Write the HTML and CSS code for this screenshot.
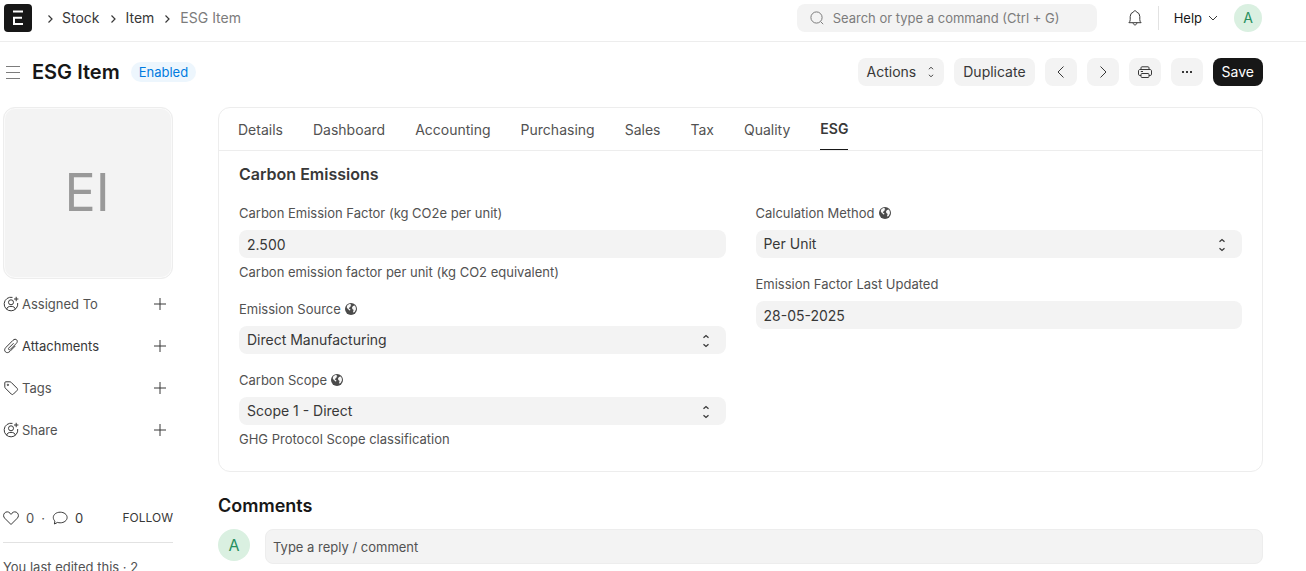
FILE: index.html
```html
<!DOCTYPE html>
<html lang="en">
<head>
<meta charset="utf-8">
<title>ESG Item</title>
<link rel="stylesheet" href="styles.css">
</head>
<body>
<svg class="sprite" aria-hidden="true">
  <symbol id="chevron-right" viewBox="0 0 16 16"><path d="M6.500 4.500 10 8l-3.500 3.500"/></symbol>
  <symbol id="plus" viewBox="0 0 16 16"><path d="M8 2v12M2 8h12"/></symbol>
  <symbol id="updown" viewBox="0 0 16 16"><path d="M5.500 4.800 8 2.600l2.500 2.200M5.500 11.200 8 13.400l2.500-2.200"/></symbol>
  <symbol id="user-plus" viewBox="0 0 16 16"><path d="M9.500 1.400A6.800 6.800 0 1 0 14.700 7M3.600 13.200c.4-1.900 1.900-2.800 4.400-2.800s4 .9 4.400 2.800M13.200.8v4.400M11 3h4.400"/><circle cx="8" cy="6.300" r="2.500"/></symbol>
  <symbol id="globe" viewBox="0 0 12 12"><circle cx="6" cy="6" r="6" fill="#4a4a4a" stroke="none"/><path d="M2.200 2.500 4.200 1.100l1.500.2.600 1-1 .6.300.9-1.200.7-.7 1.100 1.200.3.600.9-.8 1-.5-.9-1.400-1-1.100-1.600zM8 3.100l1.700-.6 1 1.500.3 2.200-1.200 2.500-1.400 1.100-.3-1.600.6-1.300-1.400-.8-.3-1.500z" fill="#f7f7f7" stroke="none"/></symbol>
</svg>

<header class="navbar">
  <nav class="breadcrumbs" aria-label="Breadcrumb">
    <a class="logo" href="#" aria-label="Home">
      <svg viewBox="0 0 28 28"><rect width="28" height="28" rx="4" fill="#171717" stroke="none"/><path d="M9 7.500h10M10 13v7M9 13.800h9M9 20h10" stroke="#fff" stroke-width="2"/></svg>
    </a>
    <svg class="sep"><use href="#chevron-right"/></svg>
    <a href="#">Stock</a>
    <svg class="sep"><use href="#chevron-right"/></svg>
    <a href="#">Item</a>
    <svg class="sep"><use href="#chevron-right"/></svg>
    <span class="current">ESG Item</span>
  </nav>
  <div class="nav-tools">
    <label class="search">
      <svg viewBox="0 0 16 16"><circle cx="7.500" cy="7.500" r="5.600"/><path d="m11.700 11.700 2.500 2.500"/></svg>
      <input type="text" aria-label="Search" placeholder="Search or type a command (Ctrl + G)">
    </label>
    <button class="bell" aria-label="Notifications"><svg viewBox="0 0 16 16"><path d="M6.200 12.700H1.900c.9-1 1.300-1.600 1.300-3V6.500a4.800 4.800 0 0 1 3.400-4.600C6.900 1 7.300.7 8 .7s1.100.3 1.400 1.200a4.800 4.800 0 0 1 3.400 4.600v3.200c0 1.400.4 2 1.300 3H6.200c0 1.400.7 2.200 1.800 2.200s1.800-.8 1.800-2.200"/></svg></button>
    <button class="help">Help <svg viewBox="0 0 12 12"><path d="m2 4 4 4 4-4"/></svg></button>
    <button class="avatar small" aria-label="Account">A</button>
  </div>
</header>

<div class="page">
  <div class="page-head">
    <button class="menu" aria-label="Toggle sidebar"><svg viewBox="0 0 16 16"><path d="M1 2.500h14M1 8.500h14M1 14.500h14"/></svg></button>
    <h1>ESG Item</h1>
    <span class="status">Enabled</span>
    <div class="actions">
      <button class="btn">Actions <svg class="caret"><use href="#updown"/></svg></button>
      <button class="btn">Duplicate</button>
      <button class="btn icon" aria-label="Previous"><svg viewBox="0 0 16 16"><path d="M10.500 2.500 5 8l5.500 5.500"/></svg></button>
      <button class="btn icon" aria-label="Next"><svg viewBox="0 0 16 16"><path d="M5.500 2.500 11 8l-5.500 5.500"/></svg></button>
      <button class="btn icon" aria-label="Print"><svg viewBox="0 0 16 16"><path d="M4 5.500V3.800c0-.6.400-1 1-1h6c.6 0 1 .4 1 1v1.700M4 11.500H2.800c-.8 0-1.300-.5-1.300-1.300V7c0-.9.600-1.500 1.500-1.500h10c.9 0 1.500.6 1.500 1.500v3.200c0 .8-.5 1.300-1.300 1.300H12M3.800 7.500H6"/><rect x="4" y="9.500" width="8" height="4" rx="1"/></svg></button>
      <button class="btn icon" aria-label="More"><svg viewBox="0 0 16 16"><path d="M3 7h2v2H3zM7 7h2v2H7zM11 7h2v2h-2z" fill="#383838" stroke="none"/></svg></button>
      <button class="btn primary">Save</button>
    </div>
  </div>

  <div class="layout">
    <aside class="sidebar">
      <div class="item-image">EI</div>
      <ul class="side-list">
        <li><svg><use href="#user-plus"/></svg><span>Assigned To</span><button aria-label="Add assignee"><svg><use href="#plus"/></svg></button></li>
        <li class="dark"><svg viewBox="0 0 16 16"><path d="m10.600 5.200-4.700 4.700c-.6.6-.6 1.200-.2 1.600s1.100.4 1.700-.2l5.800-5.800c1.300-1.300 1.400-2.700.5-3.600s-2.400-.9-3.700.4L3 9.300c-1.700 1.700-1.700 3.400-.6 4.500s2.900 1.200 4.600-.5l5.400-5.400"/></svg><span>Attachments</span><button aria-label="Add attachment"><svg><use href="#plus"/></svg></button></li>
        <li><svg viewBox="0 0 16 16"><path d="M1.800 2.800v4.100c0 .5.200.9.500 1.200l6 6c.6.600 1.500.6 2.100 0l3.700-3.700c.6-.6.600-1.500 0-2.100l-6-6c-.3-.3-.7-.5-1.200-.5H2.800c-.6 0-1 .4-1 1z"/><circle cx="4.900" cy="4.900" r=".7"/></svg><span>Tags</span><button aria-label="Add tag"><svg><use href="#plus"/></svg></button></li>
        <li><svg><use href="#user-plus"/></svg><span>Share</span><button aria-label="Add share"><svg><use href="#plus"/></svg></button></li>
      </ul>
      <div class="stats">
        <button aria-label="Like"><svg viewBox="0 0 16 16"><path d="M8 14.500 1.700 8.200C.3 6.800.2 4.600 1.500 3.100c1.500-1.700 4.100-1.700 5.500.1l1 1.200 1-1.200c1.400-1.800 4-1.800 5.500-.1 1.300 1.500 1.200 3.700-.2 5.100z"/></svg></button>
        <span>0</span><span>·</span>
        <svg viewBox="0 0 16 16"><path d="M8.200 2.200c3.900 0 6.900 2.300 6.900 5.300s-3 5.300-6.900 5.300c-.9 0-1.800-.1-2.600-.4L2.400 14l.5-3C1.900 10.100 1.300 8.900 1.300 7.500c0-3 3-5.300 6.900-5.300z"/></svg>
        <span class="count">0</span>
        <button class="follow">FOLLOW</button>
      </div>
      <p class="edited">You last edited this · 2</p>
    </aside>

    <main class="main">
      <section class="card">
        <nav class="tabs">
          <a href="#">Details</a><a href="#">Dashboard</a><a href="#">Accounting</a><a href="#">Purchasing</a><a href="#">Sales</a><a href="#">Tax</a><a href="#">Quality</a><a href="#" class="active" aria-current="page">ESG</a>
        </nav>
        <form class="form">
          <h2>Carbon Emissions</h2>
          <div class="columns">
            <div class="column">
              <div class="field">
                <label for="factor">Carbon Emission Factor (kg CO2e per unit)</label>
                <input id="factor" type="text" value="2.500">
                <p>Carbon emission factor per unit (kg CO2 equivalent)</p>
              </div>
              <div class="field">
                <label for="source">Emission Source <svg><use href="#globe"/></svg></label>
                <div class="select"><select id="source"><option>Direct Manufacturing</option></select><svg><use href="#updown"/></svg></div>
              </div>
              <div class="field">
                <label for="scope">Carbon Scope <svg><use href="#globe"/></svg></label>
                <div class="select"><select id="scope"><option>Scope 1 - Direct</option></select><svg><use href="#updown"/></svg></div>
                <p>GHG Protocol Scope classification</p>
              </div>
            </div>
            <div class="column">
              <div class="field">
                <label for="method">Calculation Method <svg><use href="#globe"/></svg></label>
                <div class="select"><select id="method"><option>Per Unit</option></select><svg><use href="#updown"/></svg></div>
              </div>
              <div class="field">
                <label for="updated">Emission Factor Last Updated</label>
                <input id="updated" type="text" value="28-05-2025">
              </div>
            </div>
          </div>
        </form>
      </section>
      <section class="comments">
        <h2>Comments</h2>
        <div class="comment-row">
          <span class="avatar">A</span>
          <input type="text" aria-label="Comment" placeholder="Type a reply / comment">
        </div>
      </section>
    </main>
  </div>
</div>
</body>
</html>
```
FILE: styles.css
```css
* { box-sizing: border-box; }
body {
  margin: 0;
  background: #fff;
  color: #383838;
  font: 14px/20px Inter, "Liberation Sans", sans-serif;
}
h1, h2, p, ul { margin: 0; padding: 0; }
a { color: inherit; text-decoration: none; }
button, input, select { font: inherit; color: inherit; border: 0; background: none; padding: 0; margin: 0; }
svg { width: 16px; height: 16px; flex: none; fill: none; stroke: #383838; stroke-width: 1; }
button svg { display: block; }
.sprite { position: absolute; width: 0; height: 0; }

.navbar {
  display: flex;
  align-items: center;
  justify-content: space-between;
  height: 42px;
  padding: 0 44px 6px 4px;
  border-bottom: 1px solid #ededed;
}
.breadcrumbs { display: flex; align-items: center; }
.logo { margin-right: 6px; }
.logo svg { display: block; width: 28px; height: 28px; }
.sep { margin: 2px 4px 0; stroke-width: 1.2; }
.current { color: #7c7c7c; }
.breadcrumbs .sep:not(:first-of-type) { margin: 2px 5px 0; }
.nav-tools { display: flex; align-items: center; font-size: 13px; }
.search {
  display: flex;
  align-items: center;
  gap: 8px;
  width: 300px;
  height: 28px;
  padding: 0 12px;
  border-radius: 8px;
  background: #f3f3f3;
}
.search svg { stroke: #7c7c7c; }
.search input { flex: 1; min-width: 0; outline: 0; }
.search input::placeholder { color: #7c7c7c; opacity: 1; }
.bell { margin: 0 15px 0 30px; }
.help { display: flex; align-items: center; gap: 5px; height: 24px; padding: 0 15px; border-left: 1px solid #e2e2e2; color: #171717; }
.help svg { width: 12px; height: 12px; }
.avatar {
  display: grid;
  place-items: center;
  flex: none;
  width: 32px;
  height: 32px;
  border-radius: 50%;
  background: #daf0e1;
  color: #278f5e;
  font-size: 16px;
}
.avatar.small { width: 28px; height: 28px; font-size: 14px; }

.page { padding: 16px 43px 0 3px; }
.page-head { display: flex; align-items: center; height: 28px; margin-bottom: 21px; }
.menu { margin: 0 11px 0 2px; }
.menu svg { stroke: #7c7c7c; }
h1 { color: #171717; font-size: 20px; line-height: 28px; font-weight: 600; }
.status { margin-left: 11px; padding: 0 8px; border-radius: 10px; background: #edf6fd; color: #007be0; font-size: 13px; }
.actions { display: flex; gap: 10px; margin-left: auto; }
.btn { display: flex; align-items: center; justify-content: center; gap: 8px; height: 28px; padding: 0 9px; border-radius: 8px; background: #f3f3f3; }
.btn .caret { width: 14px; height: 14px; margin-right: -3px; }
.btn.icon { width: 32px; padding: 0; }
.btn.primary { background: #171717; color: #fff; }

.layout { display: flex; gap: 45px; }
.sidebar { flex: none; width: 170px; font-size: 13px; color: #525252; }
.item-image {
  display: grid;
  place-items: center;
  height: 172px;
  padding-right: 2px;
  border: 1px solid #ededed;
  border-radius: 12px;
  box-shadow: inset 0 0 0 1px #fafafa;
  background: #f3f3f3;
  color: #999;
  font-size: 52px;
}
.side-list { list-style: none; margin-top: 4px; }
.side-list li { display: flex; align-items: center; gap: 3px; height: 42px; padding-right: 5px; }
.side-list button { margin-left: auto; }
.side-list .dark { color: #383838; }
.stats { display: flex; align-items: center; gap: 7px; margin-top: 57px; padding-bottom: 14px; border-bottom: 1px solid #e2e2e2; }
.stats .count { color: #383838; }
.stats .follow { margin-left: auto; color: #383838; font-size: 12px; }
.edited { margin-top: 14px; }

.main { flex: 1; min-width: 0; }
.card { border: 1px solid #ededed; border-radius: 12px; }
.tabs { display: flex; gap: 30px; padding: 0 19px; border-bottom: 1px solid #ededed; color: #525252; }
.tabs a { padding: 12px 0 10px; }
.tabs .active { padding: 11px 0 10px; border-bottom: 1px solid #171717; color: #383838; font-weight: 600; }
.form { padding: 13px 20px 21px; }
.form h2 { font-size: 16px; line-height: 20px; font-weight: 600; }
.columns { display: grid; grid-template-columns: 1fr 1fr; gap: 30px; margin-top: 20px; }
.column { display: flex; flex-direction: column; gap: 17px; }
.field label { display: flex; align-items: center; gap: 4px; margin-bottom: 8px; color: #525252; font-size: 13px; line-height: 18px; }
.field label svg { width: 12px; height: 12px; }
.field input, .field select { display: block; width: 100%; height: 28px; padding: 0 8px; border-radius: 8px; background: #f3f3f3; appearance: none; }
.field p { margin: 5px 0 2px; color: #525252; font-size: 13px; line-height: 18px; }
.select { position: relative; }
.select svg { position: absolute; right: 12px; top: 7px; pointer-events: none; stroke-width: 1.3; }
.comments { padding-top: 22px; }
.comments h2 { color: #171717; font-size: 18px; line-height: 24px; font-weight: 600; }
.comment-row { display: flex; gap: 15px; margin-top: 11px; }
.comment-row input { flex: 1; min-width: 0; height: 35px; padding: 0 7px; border: 1px solid #ededed; border-radius: 8px; background: #f3f3f3; font-size: 13px; }
.comment-row input::placeholder { color: #525252; opacity: 1; }
```
